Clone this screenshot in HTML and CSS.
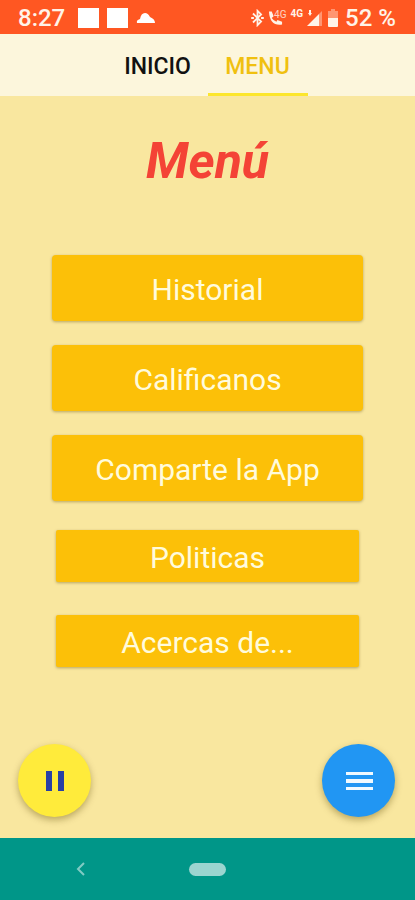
FILE: index.html
```html
<!DOCTYPE html>
<html lang="es">
<head>
<meta charset="utf-8">
<meta name="viewport" content="width=device-width, initial-scale=1">
<title>Menú</title>
<link rel="stylesheet" href="styles.css">
</head>
<body>
<header class="status">
  <div class="status-group status-left">
    <span class="clock">8:27</span>
    <span class="notice"></span>
    <span class="notice"></span>
    <svg class="cloud" viewBox="0 0 20 12" aria-hidden="true"><path d="M1 11Q0 8 4 7Q5 1 9 1Q12 1 14 5Q19 7 19 11Z"/></svg>
  </div>
  <div class="status-group status-right">
    <svg class="bluetooth" viewBox="0 0 14 20" aria-hidden="true"><path d="M2 5l9 9-4 4V2l4 4-9 9"/><path d="M0 10h3M11 10h3"/></svg>
    <span class="call">
      <svg class="phone" viewBox="0 0 16 16" aria-hidden="true"><path d="M1 1h3l2 5-2 2q2 3 5 4l1-2 5 2v3Q2 17 1 1Z"/></svg>
      <span class="call-net">4G</span>
    </span>
    <span class="net">4G</span>
    <svg class="signal" viewBox="0 0 16 18" aria-hidden="true"><path class="faint" d="M12 5l3-3v15h-3Z"/><path d="M0 17L12 5v12Z"/><path d="M2 1h2v3h1L3 7 1 4h1Z"/></svg>
    <svg class="battery" viewBox="0 0 12 18" aria-hidden="true"><path class="faint" d="M4 0h4v2h3v7H1V2h3Z"/><path d="M1 9h10v8q0 1-1 1H2q-1 0-1-1Z"/></svg>
    <span class="percent">52 %</span>
  </div>
</header>
<nav class="tabs">
  <a class="tab" href="#inicio">INICIO</a>
  <a class="tab active" href="#menu" aria-current="page">MENU</a>
</nav>
<main class="page" id="menu">
  <h1 class="title">Menú</h1>
  <div class="actions">
    <button class="action" type="button">Historial</button>
    <button class="action" type="button">Calificanos</button>
    <button class="action" type="button">Comparte la App</button>
  </div>
  <div class="actions compact">
    <button class="action" type="button">Politicas</button>
    <button class="action" type="button">Acercas de...</button>
  </div>
  <div class="fabs">
    <button class="fab pause" type="button" aria-label="Pausa"><svg viewBox="0 0 36 36" aria-hidden="true"><path d="M9 8h6v20H9zM21 8h6v20h-6z"/></svg></button>
    <button class="fab more" type="button" aria-label="Abrir menú"><svg viewBox="0 0 36 36" aria-hidden="true"><path d="M5 9h27v3H5zM5 16h27v4H5zM5 24h27v3H5z"/></svg></button>
  </div>
</main>
<footer class="system">
  <button class="back" type="button" aria-label="Atrás"><svg viewBox="0 0 10 14" aria-hidden="true"><path d="M8 1L2 7l6 6"/></svg></button>
  <button class="home" type="button" aria-label="Inicio"></button>
</footer>
</body>
</html>
```
FILE: styles.css
```css
* {
  box-sizing: border-box;
}

body {
  margin: 0;
  min-height: 100vh;
  display: flex;
  flex-direction: column;
  background: #f9e79f;
  font-family: Roboto, "Liberation Sans", sans-serif;
}

button {
  border: 0;
  padding: 0;
  font: inherit;
  cursor: pointer;
}

svg {
  display: block;
}

.status {
  height: 34px;
  padding: 2px 19px 0 18px;
  display: flex;
  align-items: center;
  justify-content: space-between;
  background: #ff5722;
  color: #fff3e8;
  fill: #fff3e8;
  font-size: 24px;
  line-height: 32px;
}

.status-group {
  display: flex;
  align-items: center;
}

.status-left {
  gap: 8px;
}

.status-right {
  gap: 4px;
}

.clock {
  margin-right: 5px;
  font-weight: 500;
}

.percent {
  margin-left: 2px;
  font-weight: 500;
}

.notice {
  width: 21px;
  height: 20px;
  background: #fff;
}

.cloud {
  width: 20px;
  height: 12px;
  fill: #fff;
}

.bluetooth {
  width: 13px;
  height: 18px;
  fill: none;
  stroke: #fff3e8;
  stroke-width: 2;
}

.call {
  display: flex;
}

.phone {
  width: 15px;
  height: 16px;
}

.call-net,
.net {
  font-size: 10px;
  line-height: 10px;
}

.call-net {
  margin-left: -9px;
  opacity: 0.8;
}

.net {
  font-weight: 700;
  margin-bottom: 8px;
}

.signal {
  width: 16px;
  height: 18px;
}

.battery {
  width: 12px;
  height: 18px;
}

.faint {
  opacity: 0.4;
}

.tabs {
  height: 62px;
  display: flex;
  justify-content: center;
  background: #fcf6dc;
}

.tab {
  width: 100px;
  padding-top: 5px;
  border-bottom: 3px solid transparent;
  display: flex;
  align-items: center;
  justify-content: center;
  color: #111;
  font-size: 23px;
  font-weight: 500;
  text-decoration: none;
}

.tab.active {
  color: #f0c010;
  border-color: #fce62c;
}

.page {
  flex: 1;
  display: flex;
  flex-direction: column;
  align-items: center;
}

.title {
  margin: 37px 0 66px;
  color: #f44336;
  font-size: 50px;
  font-style: italic;
  font-weight: 700;
  line-height: 56px;
}

.actions {
  width: 75%;
  display: flex;
  flex-direction: column;
  gap: 24px;
}

.action {
  height: 66px;
  padding-top: 2px;
  border-radius: 4px;
  background: #fcc008;
  color: #fffbdc;
  font-size: 30px;
  box-shadow: 0 1px 3px rgba(90, 70, 0, 0.4);
}

.compact {
  width: 73%;
  margin-top: 29px;
  gap: 33px;
}

.compact .action {
  height: 52px;
  border-radius: 2px;
}

.fabs {
  width: 100%;
  margin-top: auto;
  padding: 20px 20px 21px 18px;
  display: flex;
  justify-content: space-between;
}

.fab {
  width: 73px;
  height: 73px;
  border-radius: 50%;
  display: flex;
  align-items: center;
  justify-content: center;
  box-shadow: 0 3px 7px rgba(90, 70, 0, 0.4);
}

.fab svg {
  width: 36px;
  height: 36px;
}

.pause {
  background: #ffeb3b;
  fill: #283fa5;
}

.more {
  background: #2196f3;
  fill: #f0faff;
}

.system {
  height: 62px;
  display: grid;
  grid-template-columns: 1fr 37px 1fr;
  align-items: center;
  background: #009688;
}

.back {
  justify-self: center;
  padding: 0 28px 0 0;
  background: none;
}

.back svg {
  width: 10px;
  height: 14px;
  fill: none;
  stroke: #80cbc4;
  stroke-width: 2;
}

.home {
  height: 13px;
  border-radius: 7px;
  background: #9bd5d0;
}
```
